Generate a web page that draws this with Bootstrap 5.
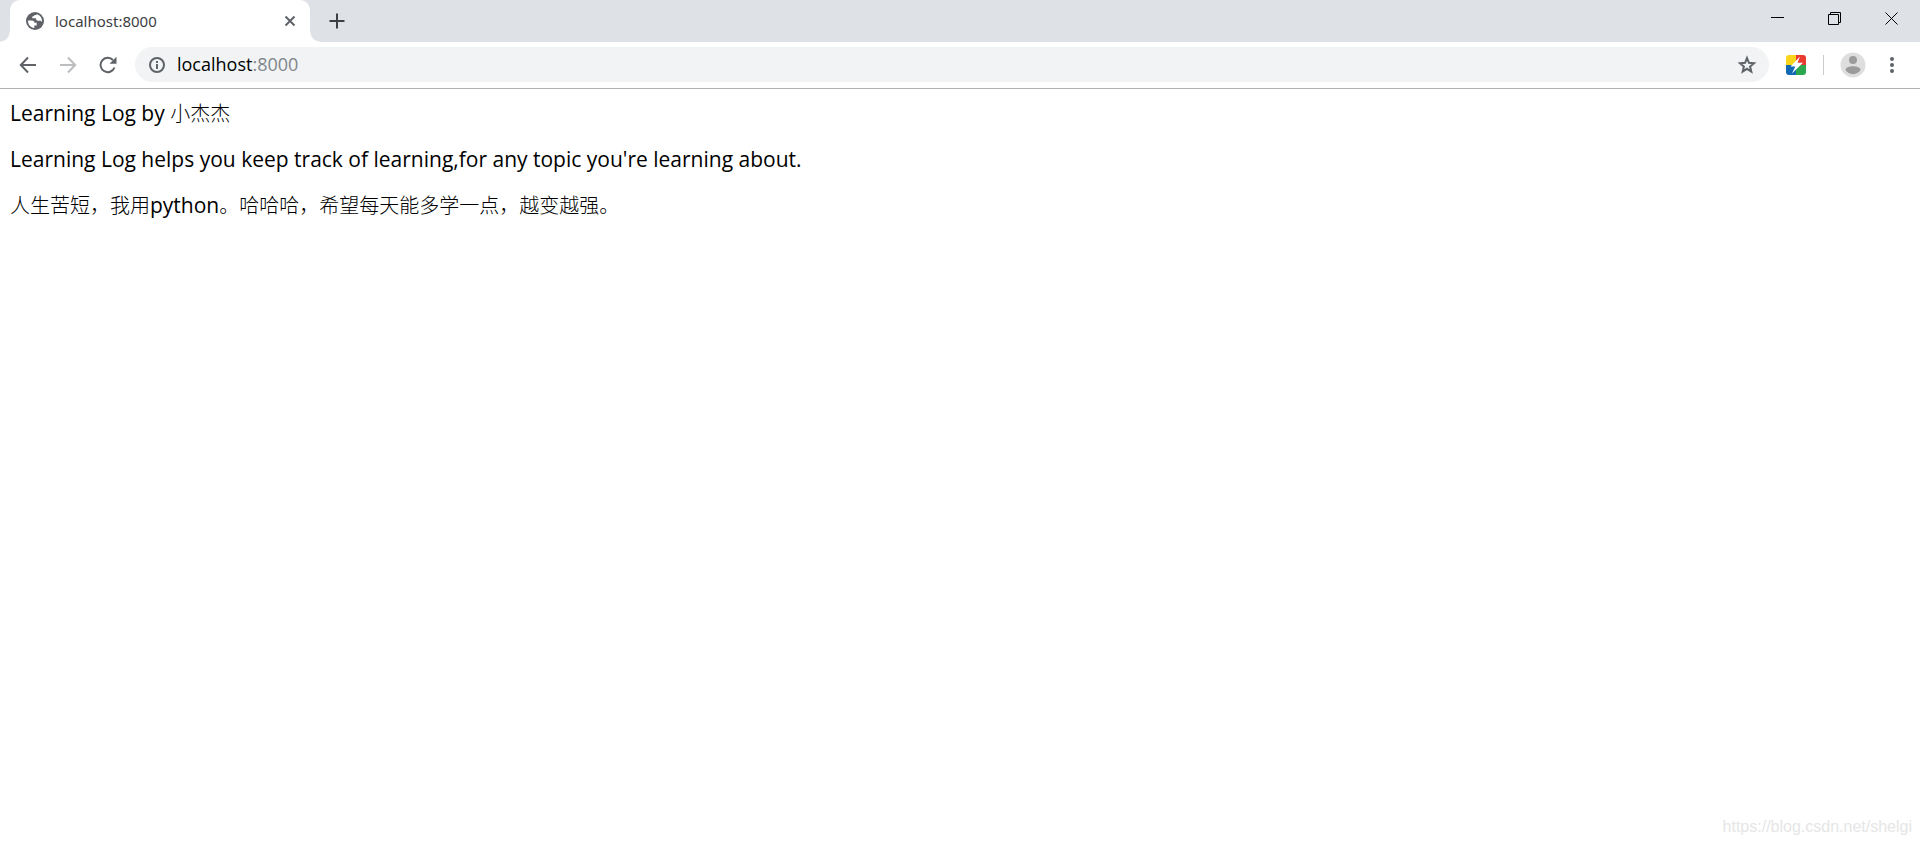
<!DOCTYPE html>
<html lang="zh-CN">
<head>
<meta charset="utf-8">
<meta name="viewport" content="width=device-width, initial-scale=1">
<title>localhost:8000</title>
<link href="https://cdn.jsdelivr.net/npm/bootstrap@5.3.0/dist/css/bootstrap.min.css" rel="stylesheet">
<style>
  body { font-family: "Open Sans", "Noto Sans CJK SC", sans-serif; color: #000; background: #fff; }
  svg { display: block; flex: none; }
  .btn.tool { --bs-btn-padding-x: 0; --bs-btn-padding-y: 0; --bs-btn-border-width: 0; --bs-btn-border-radius: 0; color: #5f6368; flex: none; display: flex; align-items: center; justify-content: center; }
  .btn.tool:disabled { color: #bbbdbf; opacity: 1; border: 0; }
  .titlebar { background: #dee1e6; height: 42px; padding-left: 10px; }
  .browser-tab { position: relative; width: 300px; height: 42px; padding: 0 12px 0 16px; background: #fff; border-radius: 10px 10px 0 0; }
  .browser-tab::before, .browser-tab::after { content: ""; position: absolute; bottom: 0; width: 10px; height: 10px; }
  .browser-tab::before { left: -10px; background: radial-gradient(circle at 0 0, transparent 9px, #fff 10px); }
  .browser-tab::after { right: -10px; background: radial-gradient(circle at 100% 0, transparent 9px, #fff 10px); }
  .tab-title { font: 15px/20px "Noto Sans", sans-serif; color: #3c4043; margin-left: 11px; }
  .new-tab { width: 34px; height: 42px; margin-left: 10px; }
  .caption .btn.tool { width: 57px; height: 37px; color: #000; }
  .toolbar { height: 47px; padding: 5px 8px 6px 8px; border-bottom: 1px solid #b3b3b5; }
  .toolbar .nav-tool { width: 40px; height: 35px; }
  .toolbar .menu-tool { margin-left: 6px; }
  .address { height: 35px; margin-left: 7px; padding: 0 12px; border-radius: 18px; background: #f1f3f4; }
  .address-text { font: 18px/24px "Open Sans", sans-serif; color: #80868b; padding: 0 0 2px 10px; }
  .address-text:hover { color: #80868b; }
  .divider { width: 1px; height: 20px; background: #c9cbce; }
  .page { padding: 11px 10px; font-size: 21px; line-height: 26px; }
  .page p { margin-bottom: 20px; }
  .page [lang="zh-CN"] { font-size: 20px; font-weight: 300; line-height: 20px; }
  .watermark { padding: 0 8px 8px 0; font: 16px/20px "Liberation Sans", sans-serif; color: #e6e6e6; }
</style>
</head>
<body class="min-vh-100 d-flex flex-column">
<header>
  <div class="titlebar d-flex">
    <div class="browser-tab d-flex align-items-center">
      <svg width="18" height="18" viewBox="0 0 18 18"><circle cx="9" cy="9" r="9" fill="#5f6368"/><path fill="#fff" d="M2 8.500h3.500c2.300 0 3 1 3 2.300h2.200v2.600H8.300V16C4.600 15.700 2 12.600 2 9zM11 2.300c3 .9 5 3.600 5 6.700l-.1 1c-.4-.9-1-1.200-2-1.200-2.500.3-4-.5-4-2.600H6.300V4.500c1.800 0 2.200-.5 2.200-1.400 1.100 0 2-.1 2.500-.8z"/></svg>
      <span class="tab-title flex-grow-1">localhost:8000</span>
      <button class="btn tool" type="button" aria-label="关闭标签页"><svg width="16" height="16" viewBox="0 0 16 16" stroke="#5f6368" stroke-width="2"><path d="M3.500 3.500l9 9m0-9l-9 9"/></svg></button>
    </div>
    <button class="btn tool new-tab" type="button" aria-label="新标签页"><svg width="16" height="16" viewBox="0 0 16 16" stroke="#3c4043" stroke-width="2"><path d="M8 .5v15M.5 8h15"/></svg></button>
    <div class="caption d-flex ms-auto">
      <button class="btn tool" type="button" aria-label="最小化"><svg width="13" height="13" viewBox="0 0 13 13" stroke="currentColor"><path d="M0 5.500h13"/></svg></button>
      <button class="btn tool" type="button" aria-label="还原"><svg width="13" height="13" viewBox="0 0 13 13" fill="none" stroke="currentColor"><path d="M.5 2.500h10v10H.5zM2.500 2.500v-2h10v10h-2"/></svg></button>
      <button class="btn tool" type="button" aria-label="关闭"><svg width="13" height="13" viewBox="0 0 13 13" stroke="currentColor"><path d="M.5.5l12 12m0-12l-12 12"/></svg></button>
    </div>
  </div>
  <div class="toolbar d-flex align-items-center">
    <button class="btn tool nav-tool" type="button" aria-label="后退"><svg width="18" height="18" viewBox="0 0 18 18" fill="none" stroke="currentColor" stroke-width="2"><path d="M17 9H2.500M9 1.500L1.800 9 9 16.500"/></svg></button>
    <button class="btn tool nav-tool" type="button" aria-label="前进" disabled><svg width="18" height="18" viewBox="0 0 18 18" fill="none" stroke="currentColor" stroke-width="2"><path d="M1 9h14.500M9 1.500L16.200 9 9 16.500"/></svg></button>
    <button class="btn tool nav-tool" type="button" aria-label="重新加载"><svg width="18" height="18" viewBox="0 0 18 18"><path d="M15.500 11.500A7.200 7.200 0 1 1 14 4" fill="none" stroke="currentColor" stroke-width="2"/><path d="M17.500.7v7h-7z" fill="currentColor"/></svg></button>
    <div class="address d-flex align-items-center flex-grow-1">
      <button class="btn tool" type="button" aria-label="查看网站信息"><svg width="20" height="20" viewBox="0 0 20 20"><circle cx="10" cy="10" r="7" fill="none" stroke="currentColor" stroke-width="2"/><path d="M9 9h2v5H9zM9 6h2v2H9z" fill="currentColor"/></svg></button>
      <a class="address-text text-decoration-none flex-grow-1" href="#"><span class="text-black">localhost</span>:8000</a>
      <button class="btn tool" type="button" aria-label="加入书签"><svg width="20" height="20" viewBox="0 0 20 20" fill="none" stroke="currentColor" stroke-width="2"><path d="M10 3l1.900 4.800 5.100.4-3.900 3.300 1.200 5L10 13.800l-4.300 2.700 1.200-5L3 8.200l5.100-.4z"/></svg></button>
    </div>
    <button class="btn tool ms-3" type="button" aria-label="扩展程序"><svg width="22" height="22" viewBox="0 0 22 22"><defs><clipPath id="tile"><rect x="1" y="1" width="20" height="20" rx="3"/></clipPath></defs><g clip-path="url(#tile)"><path fill="#fbd51b" d="M1 1h10v10H1z"/><path fill="#e83a2f" d="M11 1h10v10H11z"/><path fill="#1268b3" d="M1 11h10v10H1z"/><path fill="#2ba84f" d="M11 11h10v10H11z"/></g><path fill="#fff" d="M15 2.500L5.500 12.500h4.800L7 19.500 18 8.800h-5.500z"/></svg></button>
    <span class="divider mx-3"></span>
    <button class="btn tool" type="button" aria-label="用户"><svg width="26" height="26" viewBox="0 0 26 26"><circle cx="13" cy="13" r="12.500" fill="#dedede"/><circle cx="13" cy="8" r="4" fill="#9b9b9b"/><path d="M5.500 18c0-5 15-5 15 0-3 5.500-12 5.500-15 0z" fill="#9b9b9b"/></svg></button>
    <button class="btn tool nav-tool menu-tool" type="button" aria-label="菜单"><svg width="18" height="18" viewBox="0 0 18 18" fill="currentColor"><circle cx="9" cy="3" r="2"/><circle cx="9" cy="9" r="2"/><circle cx="9" cy="15" r="2"/></svg></button>
  </div>
</header>
<main class="page flex-grow-1">
  <p>Learning Log by <span lang="zh-CN">小杰杰</span></p>
  <p>Learning Log helps you keep track of learning,for any topic you're learning about.</p>
  <p><span lang="zh-CN">人生苦短，我用</span>python<span lang="zh-CN">。哈哈哈，希望每天能多学一点，越变越强。</span></p>
</main>
<footer class="watermark text-end">https://blog.csdn.net/shelgi</footer>
<script src="https://cdn.jsdelivr.net/npm/bootstrap@5.3.0/dist/js/bootstrap.bundle.min.js"></script>
</body>
</html>
